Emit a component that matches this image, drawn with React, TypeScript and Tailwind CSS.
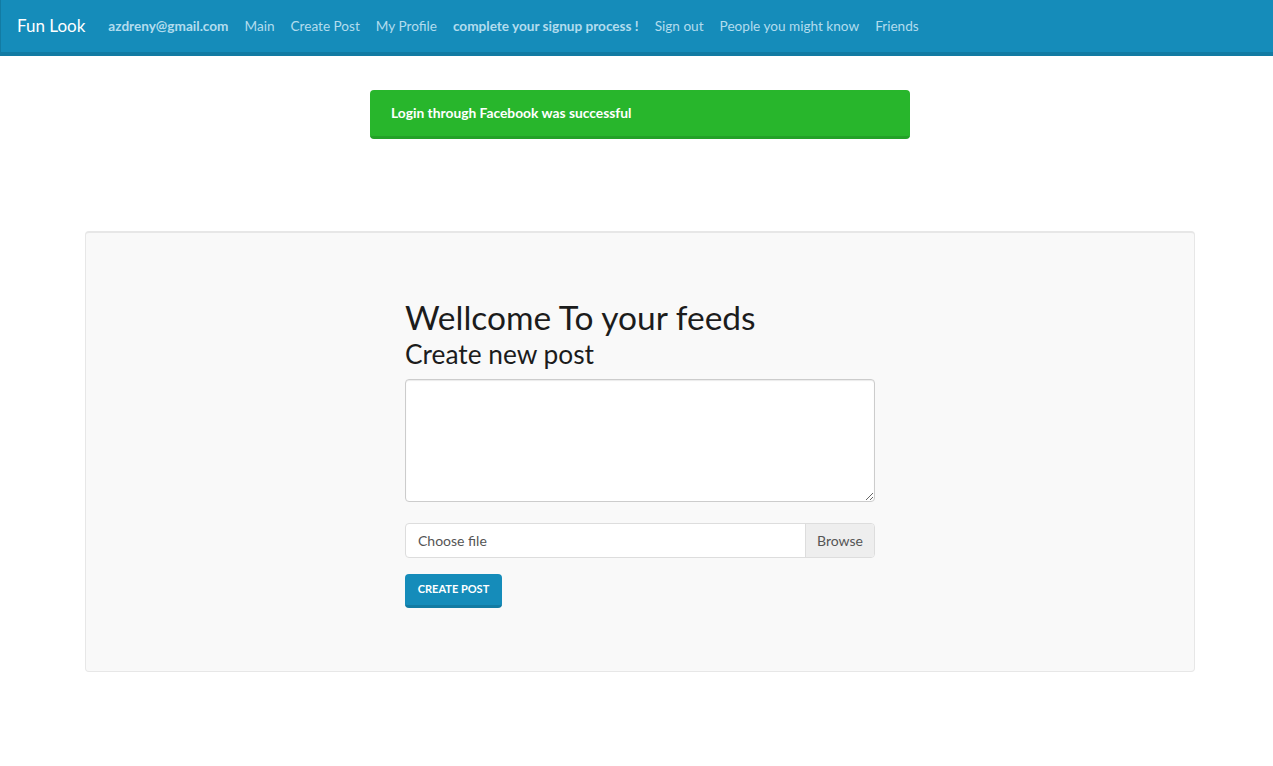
import React from 'react';

const navLinks: { label: string; bold?: boolean }[] = [
  { label: 'azdreny@gmail.com', bold: true },
  { label: 'Main' },
  { label: 'Create Post' },
  { label: 'My Profile' },
  { label: 'complete your signup process !', bold: true },
  { label: 'Sign out' },
  { label: 'People you might know' },
  { label: 'Friends' },
];

const App: React.FC = () => {
  return (
    <div className="min-h-[766px] bg-white font-['Lato',sans-serif] text-[#222]">
      <nav className="flex h-[56px] items-center border-b-4 border-l border-[#127ba3] bg-[#158cba] pl-[16px]">
        <span className="pr-[15px] text-[17px] leading-[24px] text-white">Fun Look</span>
        <ul className="flex items-center">
          {navLinks.map((link) => (
            <li key={link.label}>
              <a
                href="#"
                className={`block px-[8px] text-[13.6px] leading-[20px] text-[#b2dcee] ${link.bold ? 'font-bold' : ''}`}
              >
                {link.label}
              </a>
            </li>
          ))}
        </ul>
      </nav>

      <main>
        <div className="ml-[370px] mt-[34px] w-[540px] rounded-[4px] border-b-[3px] border-[#23a127] bg-[#28b62c] px-[21px] py-[14px] text-[13.8px] font-bold leading-[18px] text-white">
          Login through Facebook was successful
        </div>

        <section className="ml-[85px] mt-[92px] w-[1110px] rounded-[4px] border border-t-2 border-[#e7e7e7] bg-[#f9f9f9] pb-[63px] pl-[319px] pt-[63px]">
          <div className="w-[470px]">
            <h1 className="text-[33.5px] leading-[42px] text-[#1c1c1c]">Wellcome To your feeds</h1>
            <h2 className="text-[26.3px] leading-[32px] text-[#1c1c1c]">Create new post</h2>
            <form className="mt-[9px] flex flex-col">
              <textarea className="h-[123px] w-full resize-y rounded-[4px] border border-[#ccc] bg-white shadow-[inset_0_1px_1px_rgba(0,0,0,0.08)] outline-none" />
              <div className="mt-[21px] flex h-[35px] overflow-hidden rounded-[4px] border border-[#ddd] bg-white text-[14px] text-[#555]">
                <span className="flex flex-1 items-center px-[12px]">Choose file</span>
                <span className="flex items-center border-l border-[#ddd] bg-[#eee] px-[11px]">Browse</span>
              </div>
              <button
                type="button"
                className="mt-[16px] h-[34px] w-[97px] rounded-[4px] border-b-[3px] border-[#127ba3] bg-[#158cba] text-[11px] font-bold uppercase text-white"
              >
                Create Post
              </button>
            </form>
          </div>
        </section>
      </main>
    </div>
  );
};

export default App;
